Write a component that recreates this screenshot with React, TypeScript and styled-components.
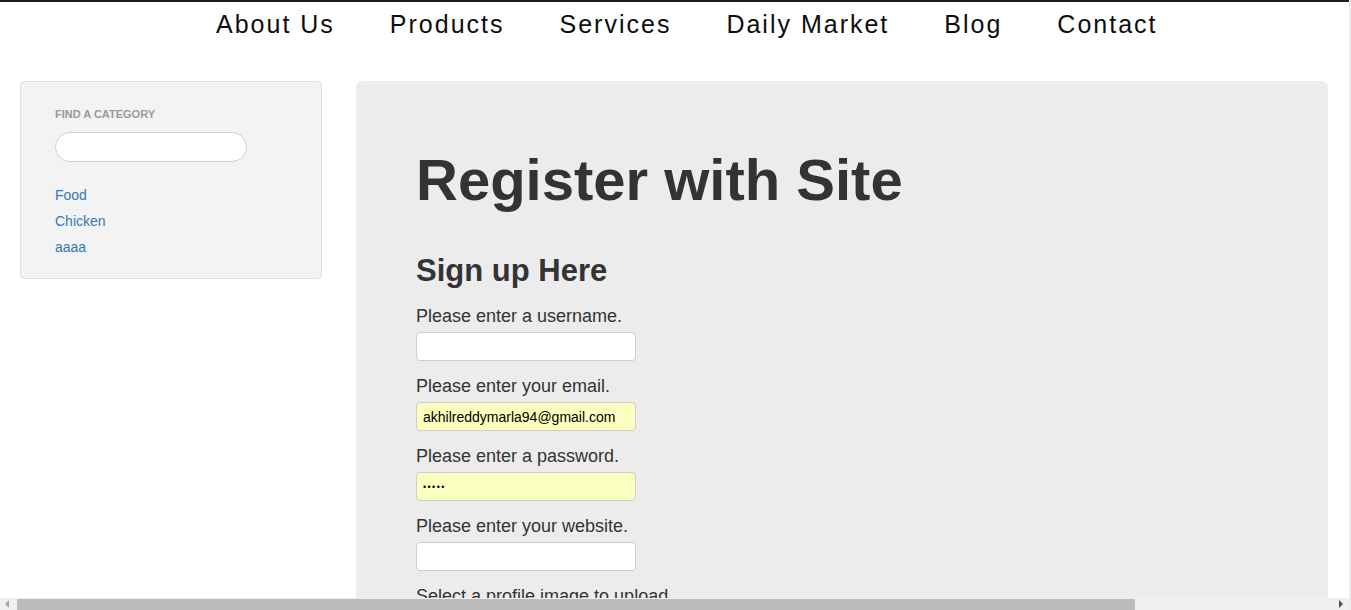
import React from "react";
import styled, { createGlobalStyle } from "styled-components";

const GlobalStyle = createGlobalStyle`
  html, body {
    margin: 0;
    padding: 0;
    background: #ffffff;
    overflow: hidden;
    font-family: "Liberation Sans", Arial, sans-serif;
  }
  * { box-sizing: border-box; }
`;

const Page = styled.div`
  width: 1351px;
  min-height: 900px;
  border-top: 2px solid #1c1c1c;
  background: #fff;
`;

const Nav = styled.nav`
  height: 79px;
  padding: 7px 0 0 216px;
`;

const NavList = styled.ul`
  display: flex;
  gap: 55px;
  margin: 0;
  padding: 0;
  list-style: none;
`;

const NavItem = styled.li`
  font-size: 25px;
  line-height: 30px;
  letter-spacing: 2px;
  color: #0d0d0d;
`;

const Body = styled.div`
  display: flex;
  align-items: flex-start;
  gap: 34px;
  padding-left: 20px;
`;

const Sidebar = styled.aside`
  width: 302px;
  background: #f3f3f3;
  border: 1px solid #e0e0e0;
  border-radius: 4px;
  padding: 26px 34px 18px;
`;

const SideTitle = styled.h4`
  margin: 0;
  font-size: 11px;
  line-height: 13px;
  font-weight: bold;
  color: #999;
  text-transform: uppercase;
`;

const SearchInput = styled.input`
  display: block;
  margin-top: 11px;
  width: 192px;
  height: 30px;
  border: 1px solid #cfcfcf;
  border-radius: 15px;
  background: #fff;
  outline: none;
`;

const CatList = styled.ul`
  list-style: none;
  margin: 20px 0 0;
  padding: 0;
`;

const CatLink = styled.a`
  display: block;
  font-size: 14px;
  line-height: 26px;
  color: #337ab7;
  text-decoration: none;
`;

const Main = styled.main`
  width: 972px;
  background: #ececec;
  border-radius: 6px;
  padding: 48px 60px;
  color: #333;
`;

const Title = styled.h1`
  margin: 19px 0 0;
  font-size: 58px;
  line-height: 64px;
  font-weight: bold;
`;

const SubTitle = styled.h2`
  margin: 42px 0 0;
  font-size: 31px;
  line-height: 34px;
  font-weight: bold;
`;

const Form = styled.form`
  margin-top: 18px;
  display: flex;
  flex-direction: column;
`;

const Field = styled.div`
  display: flex;
  flex-direction: column;
  align-items: flex-start;
  margin-bottom: 15px;
`;

const Label = styled.label`
  font-size: 18px;
  line-height: 20px;
  color: #333;
  margin-bottom: 6px;
`;

const TextInput = styled.input<{ $filled?: boolean }>`
  width: 220px;
  height: 29px;
  border: 1px solid #cdcdcd;
  border-radius: 4px;
  background: ${(p) => (p.$filled ? "#faffbd" : "#ffffff")};
  padding: 0 6px;
  font-family: "Liberation Sans", Arial, sans-serif;
  font-size: 14px;
  color: #000;
  outline: none;
`;

const PasswordInput = styled(TextInput)`
  font-size: 9px;
  letter-spacing: 1.4px;
`;

const HScroll = styled.div`
  position: fixed;
  left: 0;
  bottom: 0;
  width: 1349px;
  height: 12px;
  background: #f0f0f0;
  display: flex;
  align-items: flex-end;
  justify-content: space-between;
  padding: 0 6px 0 5px;
`;

const Thumb = styled.div`
  position: absolute;
  left: 17px;
  top: 1px;
  width: 1118px;
  height: 11px;
  background: #bcbcbc;
`;

const Arrow = styled.span<{ $dir: "left" | "right" }>`
  width: 0;
  height: 0;
  margin-bottom: 2px;
  border-top: 4px solid transparent;
  border-bottom: 4px solid transparent;
  ${(p) =>
    p.$dir === "left"
      ? "border-right: 4px solid #a3a3a3;"
      : "border-left: 4px solid #505050;"}
`;

const VEdge = styled.div`
  position: fixed;
  top: 0;
  right: 0;
  width: 2px;
  height: 100%;
  background: #ececec;
`;

const navItems = ["About Us", "Products", "Services", "Daily Market", "Blog", "Contact"];
const categories = ["Food", "Chicken", "aaaa"];

export default function App() {
  return (
    <>
      <GlobalStyle />
      <Page>
        <Nav>
          <NavList>
            {navItems.map((n) => (
              <NavItem key={n}>{n}</NavItem>
            ))}
          </NavList>
        </Nav>
        <Body>
          <Sidebar>
            <SideTitle>Find a category</SideTitle>
            <SearchInput type="text" />
            <CatList>
              {categories.map((c) => (
                <li key={c}>
                  <CatLink href="#">{c}</CatLink>
                </li>
              ))}
            </CatList>
          </Sidebar>
          <Main>
            <Title>Register with Site</Title>
            <SubTitle>Sign up Here</SubTitle>
            <Form>
              <Field>
                <Label>Please enter a username.</Label>
                <TextInput type="text" />
              </Field>
              <Field>
                <Label>Please enter your email.</Label>
                <TextInput type="text" $filled defaultValue="akhilreddymarla94@gmail.com" />
              </Field>
              <Field>
                <Label>Please enter a password.</Label>
                <PasswordInput type="password" $filled defaultValue="12345" />
              </Field>
              <Field>
                <Label>Please enter your website.</Label>
                <TextInput type="text" />
              </Field>
              <Field>
                <Label>Select a profile image to upload.</Label>
                <TextInput type="file" />
              </Field>
            </Form>
          </Main>
        </Body>
      </Page>
      <VEdge />
      <HScroll>
        <Thumb />
        <Arrow $dir="left" />
        <Arrow $dir="right" />
      </HScroll>
    </>
  );
}
